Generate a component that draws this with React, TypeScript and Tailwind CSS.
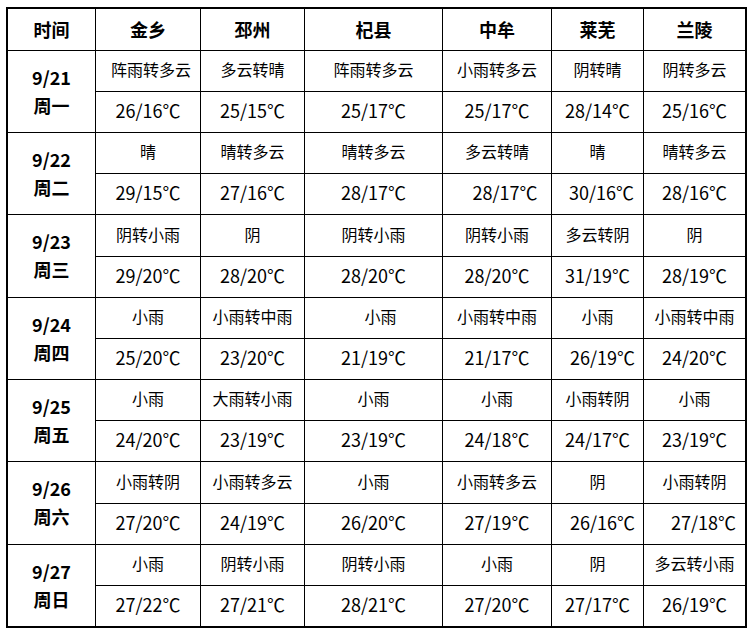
import React from "react";

const cities = ["金乡", "邳州", "杞县", "中牟", "莱芜", "兰陵"];

type Cell = { text: string; shift?: string };

type Day = {
  date: string;
  week: string;
  weather: Cell[];
  temps: Cell[];
};

const c = (text: string, shift?: string): Cell => ({ text, shift });

const days: Day[] = [
  {
    date: "9/21",
    week: "周一",
    weather: [c("阵雨转多云", "pl-[6px]"), c("多云转晴"), c("阵雨转多云"), c("小雨转多云"), c("阴转晴"), c("阴转多云")],
    temps: [c("26/16℃"), c("25/15℃"), c("25/17℃"), c("25/17℃"), c("28/14℃"), c("25/16℃")],
  },
  {
    date: "9/22",
    week: "周二",
    weather: [c("晴"), c("晴转多云"), c("晴转多云"), c("多云转晴"), c("晴"), c("晴转多云")],
    temps: [c("29/15℃"), c("27/16℃"), c("28/17℃"), c("28/17℃", "pl-[16px]"), c("30/16℃", "pl-[8px]"), c("28/16℃")],
  },
  {
    date: "9/23",
    week: "周三",
    weather: [c("阴转小雨"), c("阴"), c("阴转小雨"), c("阴转小雨"), c("多云转阴"), c("阴")],
    temps: [c("29/20℃"), c("28/20℃"), c("28/20℃"), c("28/20℃"), c("31/19℃"), c("28/19℃")],
  },
  {
    date: "9/24",
    week: "周四",
    weather: [c("小雨"), c("小雨转中雨"), c("小雨", "pl-[14px]"), c("小雨转中雨"), c("小雨"), c("小雨转中雨")],
    temps: [c("25/20℃"), c("23/20℃"), c("21/19℃"), c("21/17℃"), c("26/19℃", "pl-[10px]"), c("24/20℃")],
  },
  {
    date: "9/25",
    week: "周五",
    weather: [c("小雨"), c("大雨转小雨"), c("小雨"), c("小雨"), c("小雨转阴"), c("小雨")],
    temps: [c("24/20℃"), c("23/19℃"), c("23/19℃"), c("24/18℃"), c("24/17℃"), c("23/19℃")],
  },
  {
    date: "9/26",
    week: "周六",
    weather: [c("小雨转阴"), c("小雨转多云"), c("小雨"), c("小雨转多云"), c("阴"), c("小雨转阴")],
    temps: [c("27/20℃"), c("24/19℃"), c("26/20℃"), c("27/19℃"), c("26/16℃", "pl-[10px]"), c("27/18℃", "pl-[18px]")],
  },
  {
    date: "9/27",
    week: "周日",
    weather: [c("小雨"), c("阴转小雨"), c("阴转小雨"), c("小雨"), c("阴"), c("多云转小雨")],
    temps: [c("27/22℃"), c("27/21℃"), c("28/21℃"), c("27/20℃"), c("27/17℃"), c("26/19℃")],
  },
];

const font = { fontFamily: '"Noto Sans CJK SC", "Noto Sans", sans-serif' };

const WeatherCell = ({ cell }: { cell: Cell }) => (
  <div className={`bg-white flex items-center justify-center pb-[4px] text-[16px] leading-none text-black ${cell.shift ?? ""}`}>
    {cell.text}
  </div>
);

const TempCell = ({ cell }: { cell: Cell }) => (
  <div className={`bg-white flex items-center justify-center pb-[4px] text-[18px] leading-none text-black ${cell.shift ?? ""}`}>
    {cell.text}
  </div>
);

export default function App() {
  return (
    <div className="w-[752px] h-[634px] bg-white pt-[7px] pl-[6px]" style={font}>
      <div className="w-[741px] border-2 border-black bg-black">
        <div className="grid grid-cols-[87px_104px_103px_137px_108px_91px_101px] grid-rows-[41px_40px_40px_40px_40px_41px_40px_40px_40px_40px_40px_41px_40px_40px_40px] gap-px">
          {/* header */}
          <div className="bg-white flex items-center justify-center text-[18px] font-bold text-black">时间</div>
          {cities.map((city) => (
            <div key={city} className="bg-white flex items-center justify-center text-[18px] font-bold text-black">
              {city}
            </div>
          ))}

          {days.map((day) => (
            <React.Fragment key={day.date}>
              <div className="row-span-2 bg-white flex flex-col items-center justify-center gap-[10px] text-[18px] font-bold leading-none text-black pb-[2px]">
                <span>{day.date}</span>
                <span>{day.week}</span>
              </div>
              {day.weather.map((w, i) => (
                <WeatherCell key={"w" + i} cell={w} />
              ))}
              {day.temps.map((t, i) => (
                <TempCell key={"t" + i} cell={t} />
              ))}
            </React.Fragment>
          ))}
        </div>
      </div>
    </div>
  );
}
